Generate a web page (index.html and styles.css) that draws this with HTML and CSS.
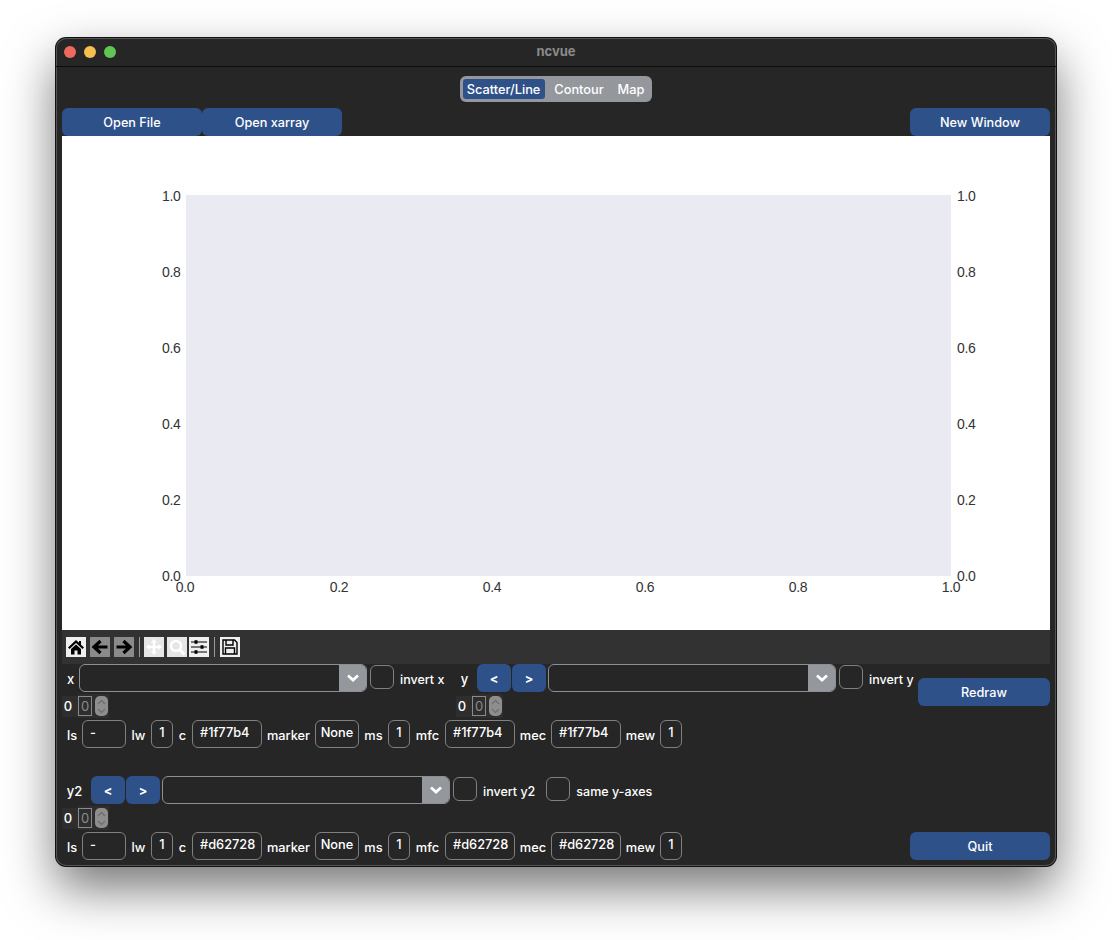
FILE: index.html
```html
<!DOCTYPE html>
<html lang="en">

<head>
  <meta charset="UTF-8">
  <title>ncvue</title>
  <link rel="stylesheet" href="styles.css">
</head>

<body>
  <div class="window">
    <div class="titlebar">
      <span class="light light-red"></span>
      <span class="light light-yellow"></span>
      <span class="light light-green"></span>
      <span class="title">ncvue</span>
    </div>

    <div class="content">
      <div class="tabs-row">
        <div class="tabs">
          <span class="tab tab-scatter">Scatter/Line</span>
          <span class="tab tab-contour">Contour</span>
          <span class="tab tab-map">Map</span>
        </div>
      </div>

      <div class="file-row">
        <button class="btn btn-file">Open File</button>
        <button class="btn btn-file">Open xarray</button>
        <button class="btn btn-new">New Window</button>
      </div>

      <svg class="plot" width="988" height="494" viewBox="0 0 988 494">
        <rect x="124" y="59" width="765" height="381" fill="#eaeaf2"></rect>
        <g class="tick" text-anchor="end">
          <text x="118.500" y="65">1.0</text>
          <text x="118.500" y="141">0.8</text>
          <text x="118.500" y="217">0.6</text>
          <text x="118.500" y="293">0.4</text>
          <text x="118.500" y="369">0.2</text>
          <text x="118.500" y="445">0.0</text>
        </g>
        <g class="tick">
          <text x="895" y="65">1.0</text>
          <text x="895" y="141">0.8</text>
          <text x="895" y="217">0.6</text>
          <text x="895" y="293">0.4</text>
          <text x="895" y="369">0.2</text>
          <text x="895" y="445">0.0</text>
        </g>
        <g class="tick" text-anchor="middle">
          <text x="123" y="456">0.0</text>
          <text x="277" y="456">0.2</text>
          <text x="430" y="456">0.4</text>
          <text x="583" y="456">0.6</text>
          <text x="736" y="456">0.8</text>
          <text x="889" y="456">1.0</text>
        </g>
      </svg>

      <div class="toolbar">
        <span class="tool tool-on">
          <svg width="18" height="18" viewBox="0 0 18 18"><path d="M9 2 L1 9.500 L2.500 11 L9 5 L15.500 11 L17 9.500 L14 6.700 V3 H12 V4.800 Z M4 11 L9 6.500 L14 11 V16.500 H10.500 V12.500 H7.500 V16.500 H4 Z" fill="#000"></path></svg>
        </span>
        <span class="tool tool-grey">
          <svg width="18" height="18" viewBox="0 0 18 18"><path d="M16.500 9 H4 M9.500 3 L3 9 L9.500 15" fill="none" stroke="#000" stroke-width="3.200"></path></svg>
        </span>
        <span class="tool tool-grey">
          <svg width="18" height="18" viewBox="0 0 18 18"><path d="M1.500 9 H14 M8.500 3 L15 9 L8.500 15" fill="none" stroke="#000" stroke-width="3.200"></path></svg>
        </span>
        <span class="tool-sep"></span>
        <span class="tool tool-off tool-pan">
          <svg width="18" height="18" viewBox="0 0 18 18"><path d="M9 1 L12 4.500 H10.200 V7.800 H13.500 V6 L17 9 L13.500 12 V10.200 H10.200 V13.500 H12 L9 17 L6 13.500 H7.800 V10.200 H4.500 V12 L1 9 L4.500 6 V7.800 H7.800 V4.500 H6 Z" fill="#fff"></path></svg>
        </span>
        <span class="tool tool-off tool-zoom">
          <svg width="18" height="18" viewBox="0 0 18 18"><circle cx="8" cy="8" r="5" fill="none" stroke="#fff" stroke-width="2.500"></circle><path d="M12 12 L16.500 16.500" stroke="#fff" stroke-width="3"></path></svg>
        </span>
        <span class="tool tool-on">
          <svg width="18" height="18" viewBox="0 0 18 18"><path d="M1 4 H17 M1 9 H17 M1 14 H17" stroke="#000" stroke-width="1.200"></path><path d="M4.500 2.200 H7.500 V5.800 H4.500 Z M10.500 7.200 H13.500 V10.800 H10.500 Z M4.500 12.200 H7.500 V15.800 H4.500 Z" fill="#000"></path></svg>
        </span>
        <span class="tool-sep tool-sep-save"></span>
        <span class="tool tool-on">
          <svg width="18" height="18" viewBox="0 0 18 18"><path d="M2 2 H13.500 L16 4.500 V16 H2 Z M5 2 V7 H12 V2 M4.500 16 V10 H13.500 V16" fill="none" stroke="#000" stroke-width="1.400"></path></svg>
        </span>
      </div>

      <div class="xy-row">
        <div class="group group-x">
          <div class="line">
            <span class="lbl lbl-x">x</span>
            <div class="combo"><span class="combo-arrow"><svg width="14" height="8" viewBox="0 0 14 8"><path d="M2 1.500 L7 6 L12 1.500" fill="none" stroke="#fff" stroke-width="2.800"></path></svg></span></div>
            <span class="check"></span>
            <span class="check-lbl">invert x</span>
          </div>
          <div class="spin-row">
            <span class="spin-val">0</span>
            <span class="spin"><span class="spin-box">0</span><span class="spin-step"><svg width="9" height="17" viewBox="0 0 9 17"><path d="M1 6 L4.500 2.500 L8 6 M1 11 L4.500 14.500 L8 11" fill="none" stroke="#6f6f6f" stroke-width="1.300"></path></svg></span></span>
          </div>
        </div>

        <div class="group group-y">
          <div class="line">
            <span class="lbl lbl-y">y</span>
            <button class="btn btn-step">&lt;</button>
            <button class="btn btn-step">&gt;</button>
            <div class="combo combo-after-step"><span class="combo-arrow"><svg width="14" height="8" viewBox="0 0 14 8"><path d="M2 1.500 L7 6 L12 1.500" fill="none" stroke="#fff" stroke-width="2.800"></path></svg></span></div>
            <span class="check"></span>
            <span class="check-lbl">invert y</span>
          </div>
          <div class="spin-row">
            <span class="spin-val">0</span>
            <span class="spin"><span class="spin-box">0</span><span class="spin-step"><svg width="9" height="17" viewBox="0 0 9 17"><path d="M1 6 L4.500 2.500 L8 6 M1 11 L4.500 14.500 L8 11" fill="none" stroke="#6f6f6f" stroke-width="1.300"></path></svg></span></span>
          </div>
        </div>

        <button class="btn btn-redraw">Redraw</button>
      </div>

      <div class="style-row">
        <div class="style-grid">
          <span>ls</span><span class="field">-</span>
          <span>lw</span><span class="field field-mid">1</span>
          <span>c</span><span class="field">#1f77b4</span>
          <span>marker</span><span class="field field-mid">None</span>
          <span>ms</span><span class="field field-mid">1</span>
          <span>mfc</span><span class="field">#1f77b4</span>
          <span>mec</span><span class="field">#1f77b4</span>
          <span>mew</span><span class="field field-mid">1</span>
        </div>
      </div>

      <div class="group group-y2">
        <div class="line">
          <span class="lbl lbl-y2">y2</span>
          <button class="btn btn-step">&lt;</button>
          <button class="btn btn-step">&gt;</button>
          <div class="combo combo-after-step"><span class="combo-arrow"><svg width="14" height="8" viewBox="0 0 14 8"><path d="M2 1.500 L7 6 L12 1.500" fill="none" stroke="#fff" stroke-width="2.800"></path></svg></span></div>
          <span class="check"></span>
          <span class="check-lbl">invert y2</span>
          <span class="check check-same"></span>
          <span class="check-lbl">same y-axes</span>
        </div>
        <div class="spin-row">
          <span class="spin-val">0</span>
          <span class="spin"><span class="spin-box">0</span><span class="spin-step"><svg width="9" height="17" viewBox="0 0 9 17"><path d="M1 6 L4.500 2.500 L8 6 M1 11 L4.500 14.500 L8 11" fill="none" stroke="#6f6f6f" stroke-width="1.300"></path></svg></span></span>
        </div>
      </div>

      <div class="style-row">
        <div class="style-grid">
          <span>ls</span><span class="field">-</span>
          <span>lw</span><span class="field field-mid">1</span>
          <span>c</span><span class="field">#d62728</span>
          <span>marker</span><span class="field field-mid">None</span>
          <span>ms</span><span class="field field-mid">1</span>
          <span>mfc</span><span class="field">#d62728</span>
          <span>mec</span><span class="field">#d62728</span>
          <span>mew</span><span class="field field-mid">1</span>
        </div>
        <button class="btn btn-quit">Quit</button>
      </div>
    </div>
  </div>
</body>

</html>
```

FILE: styles.css
```css
/* Page and window */

html {
  height: 100%;
  background-color: #fff;
}

body {
  box-sizing: border-box;
  height: 940px;
  margin: 0;
  padding: 38px 0 0 56px;
  overflow: hidden;
  background-color: #fff;
  font-family: "Inter", "Liberation Sans", sans-serif;
  font-size: 13px;
  font-weight: 500;
  color: #fff;
}

.window {
  box-sizing: border-box;
  width: 1000px;
  height: 828px;
  background-color: #262626;
  border-radius: 10px;
  box-shadow: 0 0 0 1px #111, inset 0 0 0 1px #555, 0 22px 50px rgba(0, 0, 0, 0.55);
  overflow: hidden;
}

.titlebar {
  position: relative;
  display: flex;
  align-items: center;
  gap: 8px;
  box-sizing: border-box;
  height: 29px;
  padding-left: 8px;
  border-bottom: 1px solid #0c0c0c;
}

.light {
  width: 12px;
  height: 12px;
  border-radius: 50%;
}

.light-red { background-color: #ed6a5e; }
.light-yellow { background-color: #f5bf4f; }
.light-green { background-color: #61c554; }

.title {
  position: absolute;
  top: 5px;
  left: 0;
  right: 0;
  text-align: center;
  font-weight: 700;
  font-size: 13px;
  color: #8a8a8a;
}

.content {
  padding: 0 6px;
}

/* Tabs */

.tabs-row {
  display: flex;
  justify-content: center;
  padding-top: 9px;
  height: 32px;
  margin-left: -1px;
}

.tabs {
  display: flex;
  align-items: center;
  box-sizing: border-box;
  width: 192px;
  height: 26px;
  padding-left: 3px;
  background-color: #94979c;
  border-radius: 6px;
}

.tab {
  height: 20px;
  line-height: 21px;
  text-align: center;
  border-radius: 3px;
  font-size: 12.800px;
}

.tab-scatter {
  width: 82px;
  background-color: #2f5189;
}

.tab-contour { width: 69px; }
.tab-map { width: 35px; }

/* Buttons */

.btn {
  padding: 0;
  border: none;
  border-radius: 6px;
  background-color: #2f5189;
  color: #fff;
  font-family: inherit;
  font-size: 12.700px;
  font-weight: 500;
  height: 28px;
}

.file-row {
  display: flex;
}

.btn-file { width: 140px; }

.btn-new {
  width: 140px;
  margin-left: auto;
}

.plot {
  display: block;
  background-color: #fff;
}

.tick text {
  font-family: "Liberation Sans", Arial, sans-serif;
  font-size: 14px;
  font-weight: 400;
  letter-spacing: -0.300px;
  fill: #333;
}

/* Matplotlib toolbar */

.toolbar {
  display: flex;
  align-items: center;
  height: 34px;
  padding-left: 4px;
  background-color: #323232;
}

.tool {
  display: flex;
  align-items: center;
  justify-content: center;
  width: 20px;
  height: 20px;
  margin-right: 4px;
}

.tool-on { background-color: #efefef; }
.tool-grey { background-color: #8a8a8a; }
.tool-off { background-color: #e6e6e6; }
.tool-pan { margin-right: 3px; }
.tool-zoom { margin-right: 2px; }

.tool-sep {
  width: 1px;
  height: 20px;
  margin: 0 4px 0 1px;
  background-color: #9a9a9a;
}

.tool-sep-save { margin-right: 5px; }

/* Variable rows */

.xy-row {
  display: flex;
  height: 56px;
}

.group-x { width: 394px; }
.group-y { width: 458px; }

.line {
  display: flex;
  align-items: center;
  height: 28px;
}

.lbl {
  text-align: center;
  padding-top: 2px;
}

.lbl-x { width: 17px; }

.lbl-y {
  width: 17px;
  margin-right: 4px;
}

.lbl-y2 {
  width: 25px;
  margin-right: 4px;
}

.btn-step {
  width: 34px;
  margin-right: 1px;
  font-weight: 700;
}

.combo {
  box-sizing: border-box;
  display: flex;
  justify-content: flex-end;
  width: 288px;
  height: 28px;
  border: 1px solid #8c8f94;
  border-radius: 6px;
  overflow: hidden;
}

.combo-after-step { margin-left: 1px; }

.combo-arrow {
  display: flex;
  align-items: center;
  justify-content: center;
  width: 27px;
  background-color: #94979c;
}

.check {
  box-sizing: border-box;
  width: 24px;
  height: 24px;
  margin: -2px 6px 0 3px;
  border: 1px solid #808080;
  border-radius: 6px;
}

.check-same { margin-left: 11px; }

.check-lbl {
  font-size: 12.500px;
  padding-top: 2px;
}

.spin-row {
  display: flex;
  align-items: center;
  height: 24px;
  margin-top: 2px;
}

.spin-val {
  box-sizing: border-box;
  width: 16px;
  height: 21px;
  padding-right: 4px;
  line-height: 21px;
  text-align: center;
  background-color: #2e2e2e;
}

.spin {
  display: flex;
  align-items: center;
  width: 31px;
  height: 24px;
  background-color: #2e2e2e;
}

.spin-box {
  box-sizing: border-box;
  width: 14px;
  height: 20px;
  line-height: 18px;
  text-align: center;
  font-weight: 400;
  border: 1px solid #8a8a8a;
  color: #8c8c8c;
}

.spin-step {
  display: flex;
  justify-content: center;
  align-items: center;
  width: 13px;
  height: 20px;
  margin-left: 3px;
  background-color: #8e8e8e;
  border-radius: 5px;
}

.btn-redraw {
  width: 132px;
  margin: 14px 0 0 4px;
}

/* Line style rows */

.style-row {
  display: flex;
  justify-content: space-between;
  height: 28px;
}

.style-grid {
  display: grid;
  grid-template-columns: 20px 44px 25px 22px 19px 70px 53px 44px 29px 22px 35px 70px 36px 70px 39px 22px;
  align-items: center;
  height: 28px;
  text-align: center;
  font-size: 12.800px;
}

.style-grid > span {
  box-sizing: border-box;
  height: 28px;
  padding-top: 2px;
  line-height: 28px;
}

.style-grid > .field {
  padding: 0 0 0 7px;
  text-align: left;
  line-height: 24px;
  border: 1px solid #808080;
  border-radius: 6px;
}

.style-grid > .field-mid {
  padding: 0;
  text-align: center;
}

.group-y2 {
  height: 56px;
  margin-top: 28px;
}

.btn-quit { width: 140px; }
```
